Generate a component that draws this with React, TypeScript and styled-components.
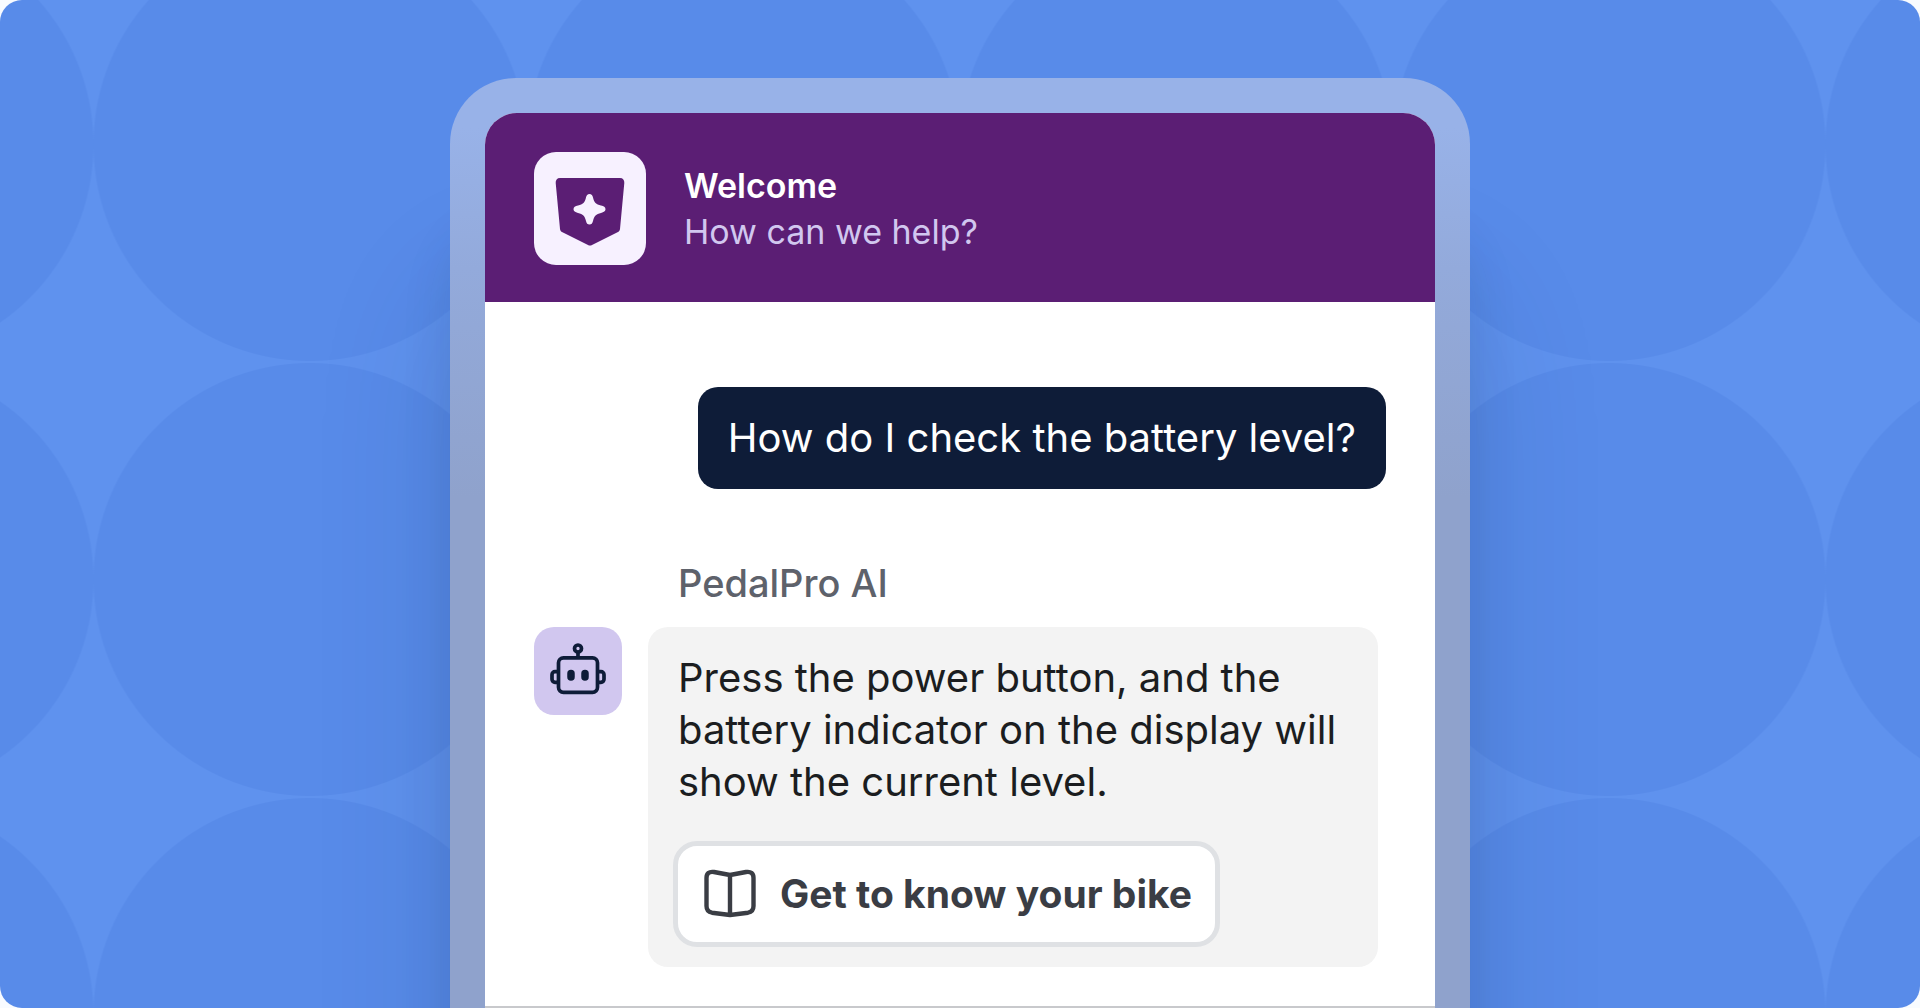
import React from "react";
import styled, { createGlobalStyle } from "styled-components";

const GlobalStyle = createGlobalStyle`
  *, *::before, *::after { box-sizing: border-box; }
  body { margin: 0; background: #f8fbff; }
  body, button { font-family: Inter, "Liberation Sans", sans-serif; }
  h1, p { margin: 0; font-weight: 400; }
`;

const Stage = styled.main`
  display: flex;
  justify-content: center;
  min-height: 100vh;
  padding: 78px 24px 0;
  overflow: hidden;
  border-radius: 22px;
  background-color: #5f92ee;
  background-image: radial-gradient(circle, #588be9 216px, transparent 217px);
  background-size: 433px 435px;
  background-position: calc(50% + 216px) -73px;
`;

const Frame = styled.div`
  display: flex;
  width: 100%;
  max-width: 1020px;
  padding: 35px 35px 0;
  border-radius: 66px 66px 0 0;
  background: linear-gradient(#98b2e8 50px, #93aadb 190px, #8fa2cc 420px);
  box-shadow:
    0 210px 140px rgba(20, 40, 80, 0.14),
    0 150px 50px rgba(20, 40, 80, 0.12);
`;

const Widget = styled.section`
  display: flex;
  flex: 1;
  flex-direction: column;
  min-width: 0;
  overflow: hidden;
  border-radius: 32px 32px 0 0;
  background: #fff;
`;

const Header = styled.header`
  display: flex;
  align-items: center;
  gap: 38px;
  padding: 39px 49px 37px;
  background: #5b1e74;
`;

const Logo = styled.div`
  display: grid;
  flex: none;
  place-items: center;
  width: 112px;
  height: 113px;
  padding-top: 6px;
  border-radius: 22px;
  background: #f7f1ff;
`;

const Title = styled.h1`
  color: #fff;
  font-size: 34px;
  font-weight: 600;
  line-height: 46px;
`;

const Subtitle = styled.p`
  color: #d1c7ef;
  font-size: 34px;
  line-height: 46px;
`;

const Conversation = styled.div`
  display: flex;
  flex: 1;
  flex-direction: column;
  padding: 85px 49px 39px;
`;

const Question = styled.p`
  align-self: flex-end;
  padding: 25px 30px;
  border-radius: 20px;
  background: #0e1c38;
  color: #fff;
  font-size: 40px;
  line-height: 52px;
`;

const Answer = styled.article`
  display: grid;
  grid-template-columns: 88px minmax(0, 730px);
  column-gap: 26px;
  row-gap: 18px;
  align-items: start;
  margin-top: 68px;
`;

const Sender = styled.p`
  grid-column: 2;
  padding-left: 30px;
  color: #5e626b;
  font-size: 38px;
  font-weight: 500;
  line-height: 52px;
`;

const Avatar = styled.div`
  display: grid;
  place-items: center;
  width: 88px;
  height: 88px;
  border-radius: 20px;
  background: #d1c7ef;
`;

const Reply = styled.div`
  display: flex;
  flex-direction: column;
  align-items: flex-start;
  gap: 33px;
  padding: 25px 25px 20px;
  border-radius: 20px;
  background: #f3f3f3;
`;

const ReplyText = styled.p`
  padding-left: 5px;
  color: #1b1d20;
  font-size: 40px;
  line-height: 52px;
`;

const ArticleButton = styled.button`
  display: flex;
  align-items: center;
  gap: 24px;
  padding: 22px 23px 22px 26px;
  border: 5px solid #dfe1e4;
  border-radius: 24px;
  background: #fff;
  color: #3a3d44;
  font-size: 39px;
  font-weight: 700;
  line-height: 52px;
  cursor: pointer;
`;

const Composer = styled.footer`
  border-top: 2px solid #c8c9cc;
`;

const ShieldIcon = () => (
  <svg width="70" height="68" viewBox="0 0 70 68" aria-hidden="true">
    <path
      d="M5 0h60c3 0 4.500 2 4.300 5l-4.300 46c-.2 1.500-1 2.500-2.500 3.300L37 67c-1.300.7-2.700.7-4 0L7.500 54.300C6 53.500 5.200 52.500 5 51L.7 5C.5 2 2 0 5 0Z"
      fill="#5b1e74"
    />
    <path
      d="M34.500 16c2 0 3 1.300 3.500 3.500 1.200 5 3 6.800 8 8 2.800.6 4.500 1.700 4.500 3.700s-1.700 3-4.500 3.700c-5 1.200-6.800 3-8 8-.6 2.200-1.500 3.600-3.500 3.600s-3-1.400-3.500-3.600c-1.200-5-3-6.800-8-8-2.800-.7-4.500-1.700-4.500-3.700s1.700-3.100 4.500-3.700c5-1.200 6.800-3 8-8 .5-2.200 1.500-3.500 3.500-3.500Z"
      fill="#f7f1ff"
    />
  </svg>
);

const RobotIcon = () => (
  <svg width="58" height="58" viewBox="0 0 58 58" fill="none" stroke="#0e1c38" strokeWidth="3.700" aria-hidden="true">
    <rect x="9.500" y="15.800" width="39" height="34.500" rx="5" />
    <circle cx="29" cy="6.500" r="3.500" />
    <path d="M29 10v5.800M9.500 29.700H6A3 3 0 0 0 3 32.700v4.600A3 3 0 0 0 6 40.300h3.500M48.500 29.700H52a3 3 0 0 1 3 3v4.600a3 3 0 0 1-3 3h-3.500" />
    <path d="M22 31.500v3.500M36 31.500v3.500" strokeWidth="7.500" strokeLinecap="round" />
  </svg>
);

const BookIcon = () => (
  <svg width="52" height="50" viewBox="0 0 52 50" fill="none" stroke="#3a3d44" strokeWidth="4.400" strokeLinejoin="round" aria-hidden="true">
    <path d="M26 6v40M26 6 10 3C5 2.200 2.500 4.500 2.500 9v28c0 4 1.800 6 5.500 6.700L26 46l18-2.300c3.700-.7 5.500-2.700 5.500-6.700V9c0-4.500-2.500-6.800-7.500-6L26 6Z" />
  </svg>
);

export default function App() {
  return (
    <>
      <GlobalStyle />
      <Stage>
        <Frame>
          <Widget>
            <Header>
              <Logo>
                <ShieldIcon />
              </Logo>
              <div>
                <Title>Welcome</Title>
                <Subtitle>How can we help?</Subtitle>
              </div>
            </Header>
            <Conversation>
              <Question>How do I check the battery level?</Question>
              <Answer>
                <Sender>PedalPro AI</Sender>
                <Avatar>
                  <RobotIcon />
                </Avatar>
                <Reply>
                  <ReplyText>
                    Press the power button, and the battery indicator on the display will show the current level.
                  </ReplyText>
                  <ArticleButton type="button">
                    <BookIcon />
                    Get to know your bike
                  </ArticleButton>
                </Reply>
              </Answer>
            </Conversation>
            <Composer />
          </Widget>
        </Frame>
      </Stage>
    </>
  );
}
